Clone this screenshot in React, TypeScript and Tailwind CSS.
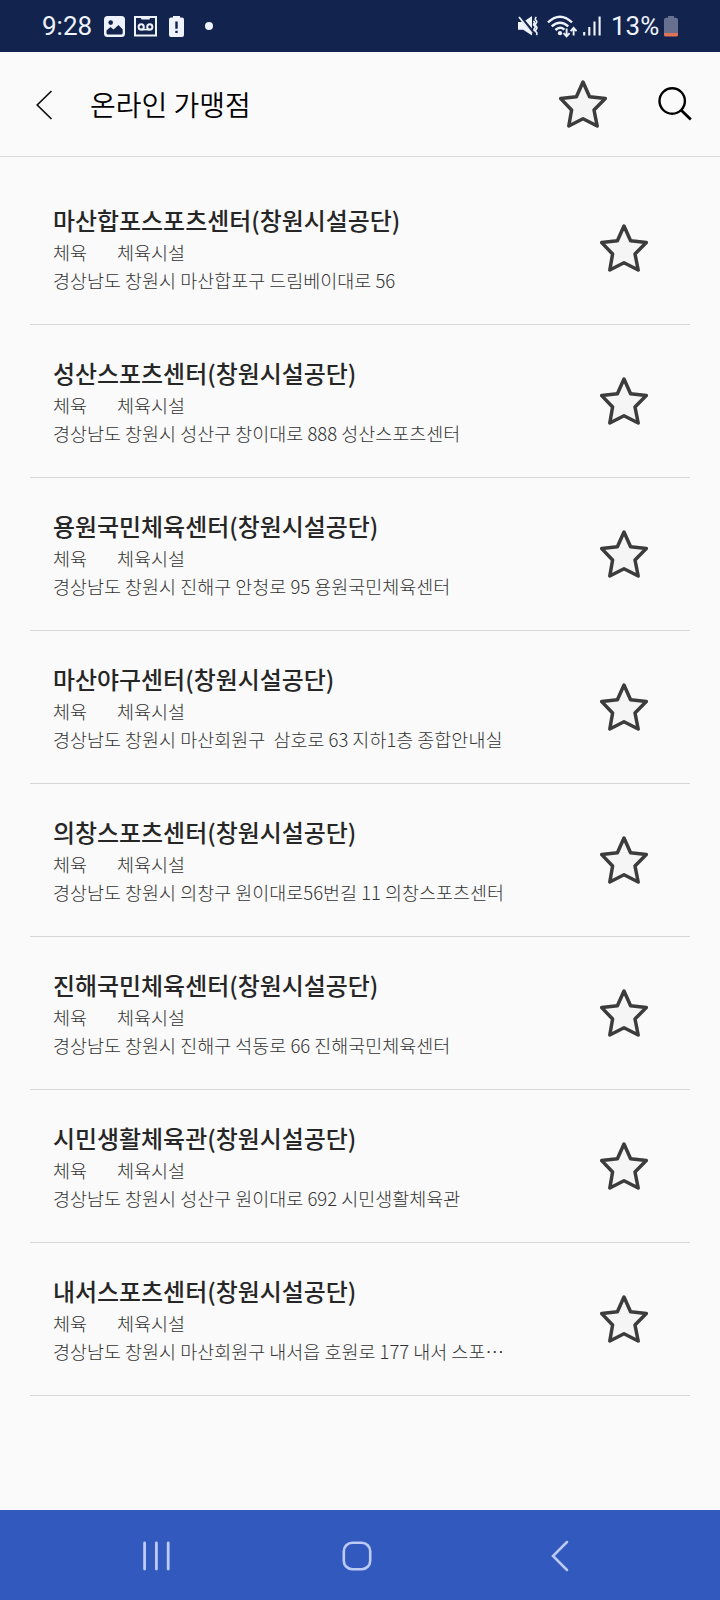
const stores = [
  { name: '마산합포스포츠센터(창원시설공단)', address: '경상남도 창원시 마산합포구 드림베이대로 56' },
  { name: '성산스포츠센터(창원시설공단)', address: '경상남도 창원시 성산구 창이대로 888 성산스포츠센터' },
  { name: '용원국민체육센터(창원시설공단)', address: '경상남도 창원시 진해구 안청로 95 용원국민체육센터' },
  { name: '마산야구센터(창원시설공단)', address: '경상남도 창원시 마산회원구  삼호로 63 지하1층 종합안내실' },
  { name: '의창스포츠센터(창원시설공단)', address: '경상남도 창원시 의창구 원이대로56번길 11 의창스포츠센터' },
  { name: '진해국민체육센터(창원시설공단)', address: '경상남도 창원시 진해구 석동로 66 진해국민체육센터' },
  { name: '시민생활체육관(창원시설공단)', address: '경상남도 창원시 성산구 원이대로 692 시민생활체육관' },
  { name: '내서스포츠센터(창원시설공단)', address: '경상남도 창원시 마산회원구 내서읍 호원로 177 내서 스포⋯' },
];

function Star() {
  return (
    <svg width="48" height="48" viewBox="0 0 48 48" className="block shrink-0">
      <path
        d="M24 2 L30.6 16.8 L46.3 18.6 L35 30 L38.2 46 L24 38.8 L9.8 46 L12.6 30 L1.7 18.6 L17.4 16.8 Z"
        fill="#f5f5f5"
        stroke="#3c3c3c"
        strokeWidth="3.5"
        strokeLinejoin="round"
      />
    </svg>
  );
}

function StatusBar() {
  return (
    <div className="flex h-[52px] shrink-0 items-center bg-[#12244d] pl-[42px] pr-[42px] text-[#eef2fb]">
      <span className="w-[62px] whitespace-nowrap font-['Roboto',sans-serif] text-[26px] leading-none">9:28</span>
      <svg width="21" height="21" viewBox="0 0 21 21">
        <rect width="21" height="21" rx="3.5" fill="currentColor" />
        <circle cx="6.7" cy="6.6" r="2.3" fill="#12244d" />
        <path d="M2.5 14.5 L6.5 11 L9.5 13.5 L14.5 9 L18.7 13.5 V17 Q18.7 18.6 17 18.6 H4.2 Q2.5 18.6 2.5 17 Z" fill="#12244d" />
      </svg>
      <svg width="23" height="21" viewBox="0 0 23 21" className="ml-[9px]">
        <path d="M1 1 H22 V19.6 H1 Z" fill="none" stroke="currentColor" strokeWidth="2" />
        <path d="M6 0 H17 L15.5 3.6 H7.5 Z" fill="currentColor" />
        <circle cx="7.2" cy="10.9" r="2.6" fill="none" stroke="currentColor" strokeWidth="2" />
        <circle cx="15.8" cy="10.9" r="2.6" fill="none" stroke="currentColor" strokeWidth="2" />
        <path d="M7.2 13.6 H15.8" stroke="currentColor" strokeWidth="1.6" />
      </svg>
      <svg width="15" height="21" viewBox="0 0 15 21" className="ml-[12px]">
        <path d="M4 1.6 V0 H11 V1.6 H13 Q15 1.6 15 3.6 V19 Q15 21 13 21 H2 Q0 21 0 19 V3.6 Q0 1.6 2 1.6 Z" fill="currentColor" />
        <path d="M6.3 5.5 H8.7 V12.8 H6.3 Z M6.3 14.8 H8.7 V17 H6.3 Z" fill="#12244d" />
      </svg>
      <span className="ml-[21px] h-[8px] w-[8px] rounded-full bg-[#eef2fb]" />
      <svg width="20" height="20" viewBox="0 0 20 20" className="ml-auto">
        <path d="M0 6 H4.2 L14 18 V19.5 L5.2 13.8 H0 Z" fill="currentColor" />
        <path d="M7.4 4.4 L14 0 V12.6 Z" fill="currentColor" />
        <path d="M1 1 L14 17.5" stroke="currentColor" strokeWidth="1.8" />
        <path d="M15.4 5 q2 1.2 0.6 2.6 q-1 1.2 0.6 2.4 q1.2 1.2 -0.2 2.6 q-1 1.2 0.4 2.6 M18.4 1 q-2 1.8 -0.4 3.4 q1.6 1.4 0 3 q-1.4 1.4 0.2 3 q1.4 1.4 0 3 q-1.4 1.4 0.2 3 q1 1 0 2.6" fill="none" stroke="currentColor" strokeWidth="1.6" />
      </svg>
      <svg width="30" height="23" viewBox="0 0 30 23" className="ml-[9px]">
        <g fill="none" stroke="currentColor" strokeWidth="2.4">
          <path d="M1 7.4 Q13 -4 25 7.4" />
          <path d="M4.7 11.4 Q13 3.9 21.3 11.4" />
          <path d="M8.4 15 Q13 10.8 17.4 14.6" />
        </g>
        <circle cx="13" cy="18.2" r="2.1" fill="currentColor" />
        <path d="M19.6 13.6 V21 M16.6 18.2 L19.6 21.4 L22.6 18.2 M26.6 20.4 V13.2 M23.6 16.2 L26.6 13 L29.6 16.2" fill="none" stroke="currentColor" strokeWidth="1.9" />
      </svg>
      <svg width="18" height="20" viewBox="0 0 18 20" className="ml-[6px]">
        <path d="M1.2 19.6 V16 M6.3 19.6 V11 M11.5 19.6 V5.5 M16.6 19.6 V0.5" stroke="currentColor" strokeWidth="2.1" strokeLinecap="butt" />
      </svg>
      <span className="ml-[10px] w-[53px] whitespace-nowrap font-['Roboto',sans-serif] text-[26px] leading-none">13%</span>
      <svg width="14" height="21" viewBox="0 0 14 21">
        <path d="M4 1.8 V0 H10 V1.8 H12 Q14 1.8 14 4 V17.4 H0 V4 Q0 1.8 2 1.8 Z" fill="#67718f" />
        <path d="M0 17 H14 V19 Q14 20.6 12.4 20.6 H1.6 Q0 20.6 0 19 Z" fill="#e07356" />
      </svg>
    </div>
  );
}

export default function App() {
  return (
    <div className="flex h-[1600px] w-[720px] flex-col bg-[#fafafa] font-['Noto_Sans_CJK_KR',sans-serif]">
      <StatusBar />
      <header className="flex h-[105px] shrink-0 items-center border-b border-[#dadada] pl-[36px] pr-[27px]">
        <svg width="17" height="30" viewBox="0 0 17 30" className="mt-px">
          <path d="M15.5 1 L1.2 15 L15.5 29" fill="none" stroke="#111" strokeWidth="1.7" />
        </svg>
        <h1 className="ml-[37px] whitespace-pre font-['Noto_Sans_CJK_KR_DemiLight','Noto_Sans_CJK_KR',sans-serif] text-[28px] font-[350] leading-[40px] text-black">온라인 가맹점</h1>
        <div className="ml-auto flex items-center gap-[50px]">
          <Star />
          <svg width="36" height="36" viewBox="0 0 36 36">
            <circle cx="15.2" cy="15" r="12.7" fill="none" stroke="#000" strokeWidth="2.4" />
            <path d="M24 24 L33.8 33.6" stroke="#000" strokeWidth="2.8" />
          </svg>
        </div>
      </header>
      <main className="flex-1 px-[30px] pt-[15px]">
        {stores.map((store) => (
          <article key={store.name} className="flex h-[153px] items-start border-b border-[#d8d8d8] pl-[23px] pr-[42px]">
            <div className="flex-1 pt-[30px]">
              <h2 className="whitespace-nowrap text-[23.95px] font-medium leading-[36px] text-[#262626]">{store.name}</h2>
              <p className="flex gap-[30px] text-[18.5px] font-light leading-[28px] text-[#333]">
                <span>체육</span>
                <span>체육시설</span>
              </p>
              <p className="whitespace-pre text-[18.49px] font-light leading-[28px] text-[#333]">{store.address}</p>
            </div>
            <div className="pt-[52px]">
              <Star />
            </div>
          </article>
        ))}
      </main>
      <nav className="flex h-[90px] shrink-0 items-center bg-[#325abe] pl-[142px] pr-[151px]">
        <svg width="30" height="30" viewBox="0 0 30 30" className="mt-px">
          <path d="M2.6 2 V28 M14.4 2 V28 M26.2 2 V28" stroke="#bccaf5" strokeWidth="2.8" strokeLinecap="round" />
        </svg>
        <svg width="30" height="30" viewBox="0 0 30 30" className="ml-[170px] mt-px">
          <rect x="1.8" y="1.8" width="26.4" height="26.4" rx="8.5" fill="none" stroke="#bccaf5" strokeWidth="2.6" />
        </svg>
        <svg width="18" height="32" viewBox="0 0 18 32" className="ml-auto mt-px">
          <path d="M16 2 L2 16 L16 30" fill="none" stroke="#bccaf5" strokeWidth="2.5" strokeLinecap="round" />
        </svg>
      </nav>
    </div>
  );
}
